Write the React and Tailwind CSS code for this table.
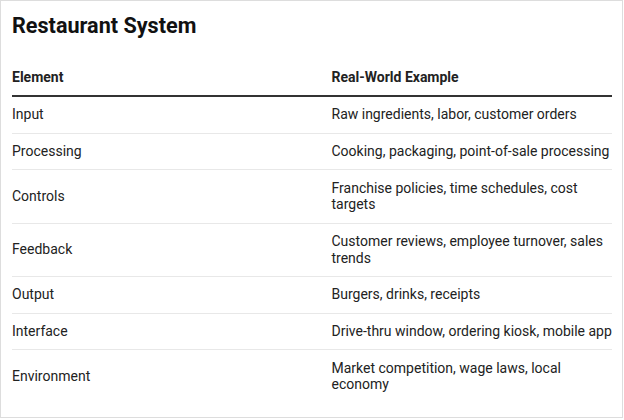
const rows = [
  ['Input', 'Raw ingredients, labor, customer orders'],
  ['Processing', 'Cooking, packaging, point-of-sale processing'],
  ['Controls', 'Franchise policies, time schedules, cost targets'],
  ['Feedback', 'Customer reviews, employee turnover, sales trends'],
  ['Output', 'Burgers, drinks, receipts'],
  ['Interface', 'Drive-thru window, ordering kiosk, mobile app'],
  ['Environment', 'Market competition, wage laws, local economy'],
]

export default function App() {
  return (
    <div className="w-[623px] h-[418px] border border-[#dddddd] bg-white pl-[11px] pt-[11.9px] font-['Roboto',sans-serif]">
      <h1 className="text-[21.6px] leading-[26px] font-bold text-[#111111]">Restaurant System</h1>

      <div className="mt-[20.6px] w-[600px] text-[14px] leading-[16.8px] text-[#222222]">
        <div className="grid grid-cols-[319.5px_1fr] border-b-2 border-[#333333] font-bold">
          <div className="py-[9.4px]">Element</div>
          <div className="py-[9.4px]">Real-World Example</div>
        </div>
        {rows.map(([el, ex], i) => (
          <div
            key={el}
            className={
              'grid grid-cols-[319.5px_1fr] ' +
              (i < rows.length - 1 ? 'border-b border-[#e8e8e8]' : '')
            }
          >
            <div className="py-[9.4px] self-center">{el}</div>
            <div className="py-[9.4px]">{ex}</div>
          </div>
        ))}
      </div>
    </div>
  )
}
